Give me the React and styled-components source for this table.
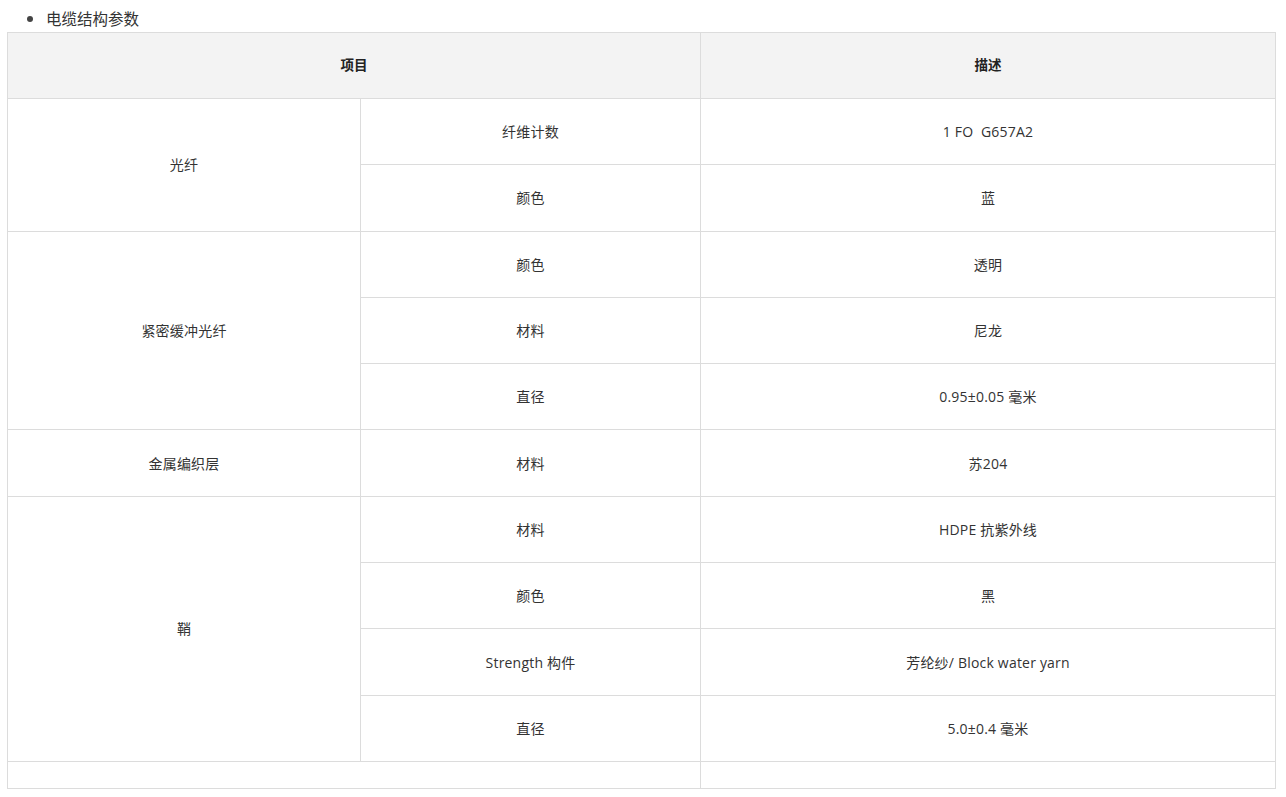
import React from "react";
import styled, { createGlobalStyle } from "styled-components";

const Global = createGlobalStyle`
  html, body { margin: 0; padding: 0; background: #fff; }
  body { font-family: "Open Sans", "Noto Sans CJK SC", sans-serif; color: #333; }
`;

const Page = styled.div`
  padding: 6px 12px 0 7px;
  width: 1267px;
`;

const List = styled.ul`
  margin: 0 0 2px 0;
  padding: 0 0 0 39px;
  font-size: 15.5px;
  line-height: 24px;
  color: #333;
  font-family: "Noto Sans CJK SC", sans-serif;
  li::marker { color: #444; }
`;

const Table = styled.table`
  width: 1268px;
  border-collapse: collapse;
  table-layout: fixed;
  font-size: 14px;
  color: #333;
`;

const Th = styled.th`
  background: #f3f3f3;
  border: 1px solid #dcdcdc;
  height: 62px;
  padding: 0 0 3px 0;
  font-weight: 700;
  font-size: 13.5px;
  color: #222;
  text-align: center;
  font-family: "Noto Sans CJK SC", sans-serif;
`;

const Td = styled.td`
  border: 1px solid #dcdcdc;
  height: ${(p) => (p.$empty ? "26px" : "64.3px")};
  padding: ${(p) => (p.$empty ? "0" : "0 0 1px 0")};
  text-align: center;
  vertical-align: middle;
  white-space: pre;
  letter-spacing: 0.2px;
  font-family: "Open Sans", "Noto Sans CJK SC", sans-serif;
`;

const rows = [
  { group: "光纤", span: 2, items: [["纤维计数", "1 FO  G657A2"], ["颜色", "蓝"]] },
  {
    group: "紧密缓冲光纤",
    span: 3,
    items: [
      ["颜色", "透明"],
      ["材料", "尼龙"],
      ["直径", "0.95±0.05 毫米"],
    ],
  },
  { group: "金属编织层", span: 1, items: [["材料", "苏204"]] },
  {
    group: "鞘",
    span: 4,
    items: [
      ["材料", "HDPE 抗紫外线"],
      ["颜色", "黑"],
      ["Strength 构件", "芳纶纱/ Block water yarn"],
      ["直径", "5.0±0.4 毫米"],
    ],
  },
];

export default function App() {
  return (
    <>
      <Global />
      <Page>
        <List>
          <li>电缆结构参数</li>
        </List>
        <Table>
          <colgroup>
            <col style={{ width: 353 }} />
            <col style={{ width: 340 }} />
            <col style={{ width: 575 }} />
          </colgroup>
          <thead>
            <tr>
              <Th colSpan={2}>项目</Th>
              <Th>描述</Th>
            </tr>
          </thead>
          <tbody>
            {rows.map((g) =>
              g.items.map((it, i) => (
                <tr key={g.group + i}>
                  {i === 0 && <Td rowSpan={g.span}>{g.group}</Td>}
                  <Td>{it[0]}</Td>
                  <Td>{it[1]}</Td>
                </tr>
              ))
            )}
            <tr>
              <Td $empty colSpan={2} />
              <Td $empty />
            </tr>
          </tbody>
        </Table>
      </Page>
    </>
  );
}
